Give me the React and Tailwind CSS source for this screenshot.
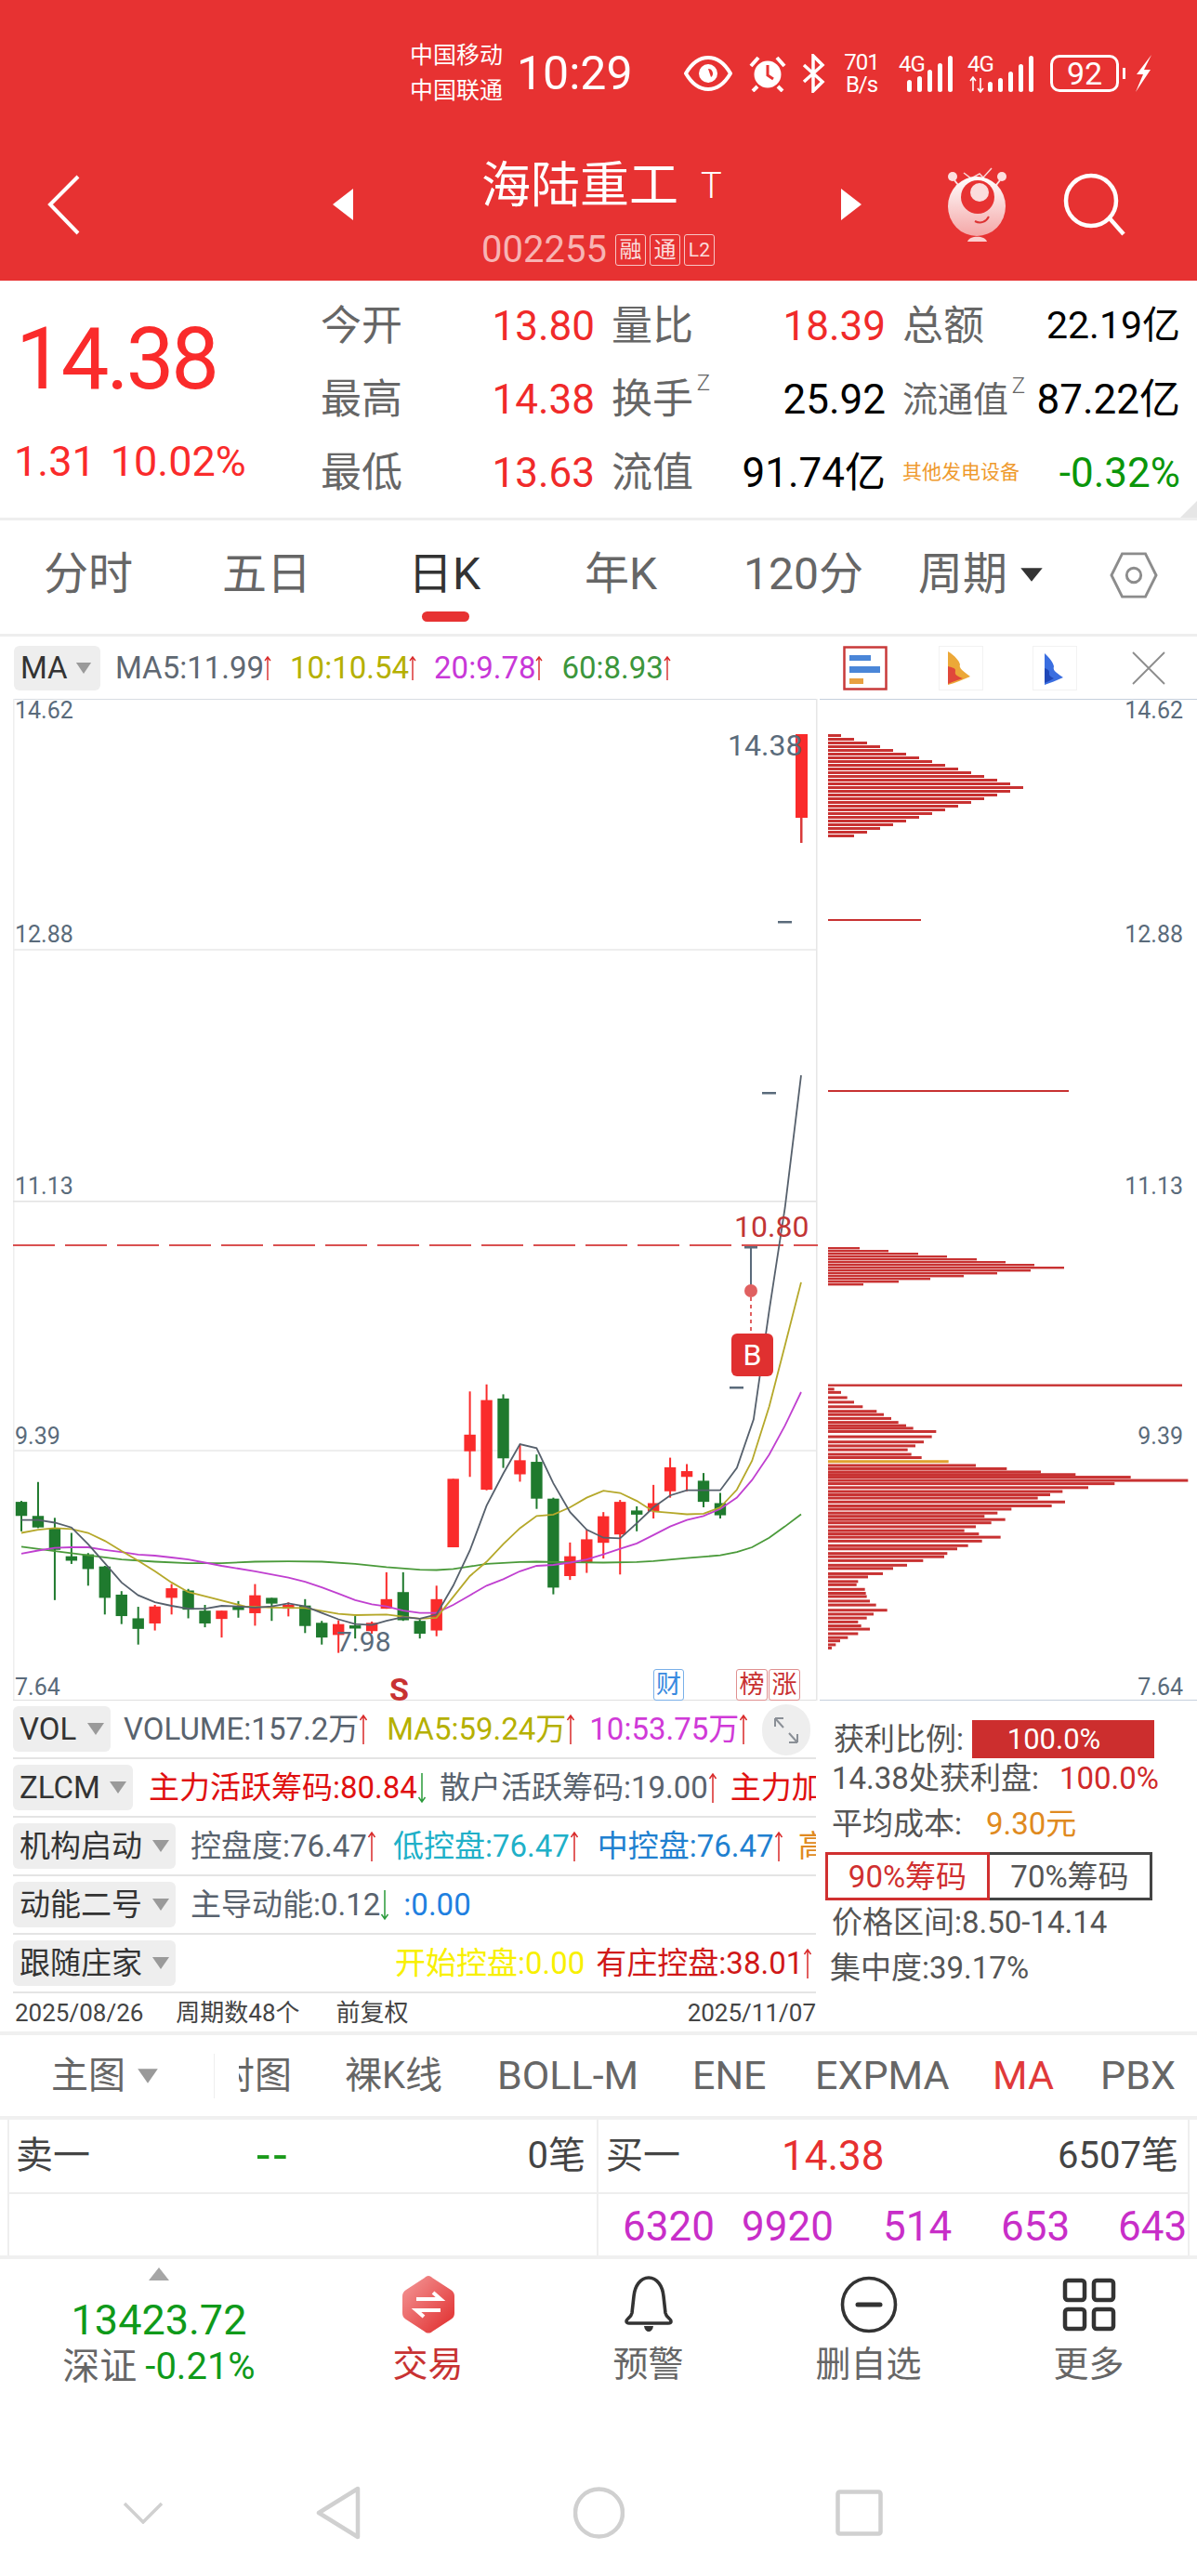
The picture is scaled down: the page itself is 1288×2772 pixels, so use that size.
import React from 'react';

const X = (z) => z / 1.782;
const Y = (z) => 1300 + z / 2.904;

// cx, wickTop, bodyTop, bodyBottom, wickBottom, up
const candles = [
  [41, 915, 918, 962, 1010, 0], [73, 856, 962, 998, 1000, 0], [105, 968, 1000, 1068, 1225, 0],
  [137, 1015, 1088, 1102, 1112, 0], [169, 1078, 1082, 1128, 1180, 0], [201, 1118, 1120, 1218, 1270, 0],
  [233, 1197, 1208, 1275, 1300, 0], [265, 1246, 1282, 1315, 1364, 0], [297, 1240, 1245, 1298, 1320, 1],
  [329, 1175, 1188, 1218, 1270, 1], [361, 1190, 1195, 1255, 1282, 0], [393, 1240, 1258, 1298, 1310, 0],
  [425, 1258, 1258, 1284, 1342, 1], [457, 1228, 1244, 1256, 1280, 0], [489, 1175, 1210, 1266, 1305, 1],
  [521, 1218, 1218, 1236, 1290, 0], [553, 1232, 1240, 1252, 1276, 1], [585, 1222, 1242, 1306, 1328, 0],
  [617, 1290, 1296, 1342, 1364, 0], [649, 1288, 1300, 1334, 1390, 1], [681, 1275, 1304, 1314, 1345, 0],
  [713, 1292, 1296, 1322, 1330, 1], [741, 1138, 1222, 1252, 1252, 1], [773, 1138, 1200, 1288, 1290, 0],
  [805, 1285, 1290, 1330, 1345, 0], [837, 1180, 1222, 1320, 1338, 1], [869, 846, 846, 1060, 1060, 1],
  [901, 573, 708, 760, 840, 1], [933, 551, 600, 880, 882, 1], [965, 582, 595, 782, 812, 0],
  [997, 740, 788, 832, 855, 1], [1029, 770, 793, 908, 940, 0], [1061, 905, 908, 1186, 1207, 0],
  [1093, 1045, 1088, 1150, 1162, 1], [1125, 1005, 1035, 1108, 1140, 1], [1157, 950, 963, 1046, 1095, 1],
  [1189, 912, 918, 1020, 1145, 1], [1221, 932, 945, 958, 1010, 0], [1253, 865, 922, 948, 970, 1],
  [1285, 780, 810, 885, 905, 1], [1317, 800, 822, 840, 885, 1], [1349, 828, 852, 918, 935, 0],
  [1381, 890, 922, 960, 970, 0],
];

const ma5 = [41,975,73,975,105,983,137,998,169,1050,201,1110,233,1170,265,1210,297,1232,329,1243,361,1252,393,1252,425,1243,457,1245,489,1248,521,1245,553,1235,585,1245,617,1265,649,1285,681,1300,713,1303,741,1290,773,1278,805,1283,837,1270,869,1180,901,1070,933,930,965,830,997,738,1029,750,1061,860,1093,950,1125,1005,1157,1030,1189,1032,1221,985,1253,935,1285,898,1317,882,1349,882,1381,882,1413,812,1445,660,1475,320,1505,0,1536,-415];
const ma10 = [41,1015,73,1005,105,1000,137,1003,169,1015,201,1040,233,1072,265,1102,297,1135,329,1170,361,1200,405,1218,470,1245,521,1248,585,1250,649,1268,681,1272,741,1270,805,1283,837,1280,869,1215,901,1150,933,1105,965,1050,997,1000,1029,962,1061,958,1093,935,1125,905,1157,883,1189,890,1221,915,1253,948,1285,952,1317,957,1349,955,1381,935,1413,880,1442,790,1475,620,1505,430,1536,232];
const ma20 = [41,1080,73,1070,105,1062,137,1060,169,1060,201,1068,233,1075,265,1083,297,1086,329,1092,361,1098,393,1108,425,1118,489,1135,553,1155,585,1168,617,1185,649,1205,681,1225,713,1238,741,1245,773,1258,805,1265,837,1265,869,1240,901,1210,933,1180,965,1160,997,1135,1029,1118,1061,1115,1093,1108,1125,1098,1157,1082,1189,1065,1221,1048,1253,1022,1285,995,1317,975,1349,962,1381,940,1413,905,1442,850,1475,770,1505,680,1536,575];
const ma60 = [41,1058,105,1072,169,1085,233,1098,297,1105,361,1110,425,1110,489,1105,553,1104,617,1105,681,1112,741,1122,805,1130,837,1131,869,1128,901,1120,933,1112,997,1106,1029,1105,1093,1107,1157,1108,1221,1106,1253,1103,1317,1094,1381,1085,1413,1075,1442,1060,1475,1030,1505,995,1536,957];

const toPoints = (arr) => {
  const out = [];
  for (let i = 0; i < arr.length; i += 2) out.push(`${X(arr[i]).toFixed(1)},${Y(arr[i + 1]).toFixed(1)}`);
  return out.join(' ');
};

// chip distribution, bottom group read as [zoomY, zoomX end]
const chipLow = [[1045,113],[1050,135],[1058,155],[1065,177],[1072,205],[1079,250],[1084,273],[1090,297],[1096,320],[1101,345],[1105,368],[1110,442],[1118,428],[1126,402],[1132,375],[1138,350],[1145,362],[1150,395],[1156,482],[1162,570],[1167,670],[1172,780],[1176,892],[1180,1070],[1185,1255],[1190,1018],[1196,933],[1202,850],[1207,810],[1212,770],[1218,858],[1224,815],[1229,685],[1235,640],[1240,598],[1245,665],[1250,620],[1256,570],[1262,533],[1267,580],[1272,650],[1278,590],[1285,545],[1290,510],[1297,478],[1302,468],[1308,400],[1315,348],[1320,303],[1328,270],[1333,222],[1340,190],[1345,185],[1352,212],[1358,215],[1363,218],[1370,228],[1376,248],[1384,284],[1390,240],[1396,218],[1402,190],[1408,200],[1413,228],[1420,190],[1426,157],[1431,132],[1437,118],[1442,105]];
const chipMid = [34, 65, 97, 128, 160, 191, 222, 254, 218, 182, 146, 110, 76, 38];

function TriDown({ className = 'w-[20px] h-[15px]', color = '#9a9a9a' }) {
  return (
    <svg viewBox="0 0 20 15" className={className} preserveAspectRatio="none">
      <path d="M1 1h18L10 14z" fill={color} />
    </svg>
  );
}

function Arrow({ up = true, className = '' }) {
  return (
    <svg viewBox="0 0 10 34" className={`w-[10px] h-[34px] shrink-0 ${className}`} fill="none" stroke={up ? '#d92a2a' : '#2a9a3a'} strokeWidth="1.5">
      {up ? <path d="M5 33V2M1.5 7 5 2l3.5 5" /> : <path d="M5 1v31M1.5 27 5 32l3.5-5" />}
    </svg>
  );
}

function SmallArrow() {
  return (
    <svg viewBox="0 0 8 28" className="w-[8px] h-[28px] shrink-0" fill="none" stroke="#d92a2a" strokeWidth="1.4">
      <path d="M4 27V2M1 6l3-4 3 4" />
    </svg>
  );
}

function Quote({ label, value, valueClass, sup, labelClass = 'text-[44px]' }) {
  return (
    <div className="flex items-center justify-between h-[79px]">
      <span className={`relative text-[#666666] ${labelClass}`}>
        {label}
        {sup && <span className="absolute -right-[18px] -top-[8px] text-[24px] font-light leading-none">Z</span>}
      </span>
      <span className={valueClass}>{value}</span>
    </div>
  );
}

function Signal({ extra }) {
  return (
    <div className={`relative h-[42px] shrink-0 ${extra ? 'w-[72px]' : 'w-[60px]'}`}>
      <span className="absolute left-0 top-0 text-[24px] leading-[22px] tracking-[-1px]">4G</span>
      <svg viewBox="0 0 72 42" className="absolute left-0 top-0 h-[42px] w-[72px]" fill="#fff">
        {extra ? (
          <>
            <path d="M6 26v14M3 29l3-4 3 4M14 40V26M11 37l3 4 3-4" stroke="#fff" strokeWidth="1.6" fill="none" />
            <rect x="22" y="30" width="5" height="11" rx="2.5" />
            <rect x="33" y="26" width="5" height="15" rx="2.5" />
            <rect x="44" y="19" width="5" height="22" rx="2.5" />
            <rect x="55" y="11" width="5" height="30" rx="2.5" />
            <rect x="66" y="2" width="5" height="39" rx="2.5" />
          </>
        ) : (
          <>
            <rect x="9" y="28" width="5" height="13" rx="2.5" />
            <rect x="20" y="24" width="5" height="17" rx="2.5" />
            <rect x="31" y="17" width="5" height="24" rx="2.5" />
            <rect x="42" y="10" width="5" height="31" rx="2.5" />
            <rect x="53" y="2" width="5" height="39" rx="2.5" />
          </>
        )}
      </svg>
    </div>
  );
}

function StatusBar() {
  return (
    <div className="flex items-center h-[78px] pl-[441px] text-white">
      <div className="flex flex-col w-[104px] text-[25px] leading-[38px] font-normal whitespace-nowrap">
        <span>中国移动</span>
        <span>中国联通</span>
      </div>
      <span className="ml-[11px] w-[122px] text-[50px] leading-none font-normal whitespace-nowrap">10:29</span>
      <svg viewBox="0 0 52 38" className="ml-[58px] w-[52px] h-[38px] shrink-0" fill="none">
        <path d="M2 19C9 7 17 2 26 2s17 5 24 17c-7 12-15 17-24 17S9 31 2 19z" stroke="#fff" strokeWidth="4" />
        <circle cx="26" cy="19" r="10" fill="#fff" />
        <path d="M26 14a5 5 0 0 1 3 9c-1-3-2-6-3-9z" fill="#e73232" />
      </svg>
      <svg viewBox="0 0 42 40" className="ml-[17px] w-[42px] h-[40px] shrink-0">
        <circle cx="21" cy="21" r="14.5" fill="#fff" />
        <path d="M21 11v11l6 4" stroke="#e73232" strokeWidth="3" fill="none" />
        <path d="M3 12 11 3M39 12 31 3M10 34l-5 5M32 34l5 5" stroke="#fff" strokeWidth="4" />
      </svg>
      <svg viewBox="0 0 26 42" className="ml-[16px] w-[26px] h-[42px] shrink-0" fill="none" stroke="#fff" strokeWidth="3.5">
        <path d="M2 12 22 30 12 40V2l10 10L2 30" />
      </svg>
      <div className="ml-[17px] flex flex-col w-[42px] text-[24px] leading-[24px] text-center tracking-[-1px] whitespace-nowrap">
        <span>701</span>
        <span>B/s</span>
      </div>
      <div className="ml-[19px]"><Signal /></div>
      <div className="ml-[14px]"><Signal extra /></div>
      <div className="ml-[17px] flex items-center justify-center w-[74px] h-[40px] rounded-[10px] border-[3px] border-white text-[34px] leading-none shrink-0">92</div>
      <span className="ml-[4px] w-[3px] h-[12px] bg-white shrink-0" />
      <svg viewBox="0 0 20 42" className="ml-[9px] w-[20px] h-[42px] shrink-0" fill="#fff">
        <path d="M19 1 3 22h7L2 41l16-24h-7z" />
      </svg>
    </div>
  );
}

function Mascot() {
  return (
    <svg viewBox="0 0 65 84" className="ml-[92px] w-[65px] h-[84px] shrink-0">
      <defs>
        <linearGradient id="mascot" x1="0" y1="0" x2="0" y2="1">
          <stop offset="0" stopColor="#ffffff" />
          <stop offset="1" stopColor="#f4a6a6" />
        </linearGradient>
      </defs>
      <path d="M18 8 26 14 35 9l4 4 9-10" stroke="#fff" strokeWidth="1.5" fill="none" opacity=".8" />
      <circle cx="6" cy="12" r="5" fill="#fde0e0" />
      <circle cx="59" cy="12" r="5" fill="#fde0e0" />
      <path d="M8 16 16 26M57 16 49 26" stroke="#fde0e0" strokeWidth="2" />
      <ellipse cx="32" cy="44" rx="31" ry="32" fill="url(#mascot)" />
      <circle cx="33" cy="34" r="18" fill="#e73232" />
      <circle cx="35" cy="29" r="10" fill="#fbdcdc" />
      <path d="M30 60c6 3 12 1 15-5" stroke="#d33" strokeWidth="2" fill="none" />
      <path d="M22 82c2-7 19-7 21 0z" fill="#fbd0d0" />
    </svg>
  );
}

function Header() {
  return (
    <div className="h-[302px] shrink-0 bg-[#e73232] pt-[40px]">
      <StatusBar />
      <div className="mt-[32px] flex items-center h-[140px] text-white">
        <svg viewBox="0 0 35 65" className="ml-[51px] w-[35px] h-[65px] shrink-0" fill="none" stroke="#fff" strokeWidth="4">
          <path d="M33 2 3 32l30 31" />
        </svg>
        <svg viewBox="0 0 22 34" className="ml-[272px] w-[22px] h-[34px] shrink-0" fill="#fff"><path d="M22 0v34L0 17z" /></svg>
        <div className="ml-[138px] w-[387px] self-start pt-[18px]">
          <div className="flex items-center h-[64px]">
            <span className="text-[53px] leading-none whitespace-nowrap">海陆重工</span>
            <span className="ml-[24px] text-[38px] leading-none font-light">T</span>
          </div>
          <div className="mt-[20px] flex items-center h-[34px]">
            <span className="text-[40px] leading-none text-[#f7b4b4]">002255</span>
            <span className="ml-[9px] flex items-center justify-center w-[33px] h-[34px] rounded-[3px] border border-[#f7c4c4] text-[24px] leading-none text-[#fbdcdc]">融</span>
            <span className="ml-[4px] flex items-center justify-center w-[33px] h-[34px] rounded-[3px] border border-[#f7c4c4] text-[24px] leading-none text-[#fbdcdc]">通</span>
            <span className="ml-[4px] flex items-center justify-center w-[33px] h-[34px] rounded-[3px] border border-[#f7c4c4] text-[21px] leading-none text-[#fbdcdc]">L2</span>
          </div>
        </div>
        <svg viewBox="0 0 22 34" className="w-[22px] h-[34px] shrink-0" fill="#fff"><path d="M0 0v34l22-17z" /></svg>
        <Mascot />
        <svg viewBox="0 0 68 68" className="ml-[60px] w-[68px] h-[68px] shrink-0" fill="none" stroke="#fff" strokeWidth="4.5">
          <circle cx="30" cy="30" r="27" />
          <path d="m50 49 15 17" />
        </svg>
      </div>
    </div>
  );
}

function QuotePanel() {
  return (
    <div className="relative flex h-[258px] shrink-0 border-b-[3px] border-[#eeeeee]">
      <div className="w-[345px] shrink-0 text-[#fa2b2b]">
        <div className="mt-[33px] pl-[17px] h-[104px] flex items-center text-[92px] leading-none tracking-[-3px]">14.38</div>
        <div className="mt-[32px] pl-[15px] h-[50px] flex items-center text-[45px] leading-none whitespace-nowrap">
          <span>1.31</span>
          <span className="ml-[16px]">10.02%</span>
        </div>
      </div>
      <div className="pt-[9px] grid content-start grid-cols-[295px_295px_299px] gap-x-[18px] whitespace-nowrap leading-none">
        <Quote label="今开" value="13.80" valueClass="text-[44px] text-[#f02a2a]" />
        <Quote label="量比" value="18.39" valueClass="text-[44px] text-[#f02a2a]" />
        <Quote label="总额" value="22.19亿" valueClass="text-[41px] text-black" />
        <Quote label="最高" value="14.38" valueClass="text-[44px] text-[#f02a2a]" />
        <Quote label="换手" sup value="25.92" valueClass="text-[44px] text-black" />
        <Quote label="流通值" sup labelClass="text-[38px]" value="87.22亿" valueClass="text-[44px] text-black" />
        <Quote label="最低" value="13.63" valueClass="text-[44px] text-[#f02a2a]" />
        <Quote label="流值" value="91.74亿" valueClass="text-[44px] text-black" />
        <div className="flex items-center justify-between h-[79px]">
          <span className="text-[21px] text-[#ef9a2e]">其他发电设备</span>
          <span className="text-[44px] text-[#0a960a]">-0.32%</span>
        </div>
      </div>
      <svg viewBox="0 0 18 18" className="absolute right-0 bottom-0 w-[18px] h-[18px]"><path d="M18 0v18H0z" fill="#e6e6e6" /></svg>
    </div>
  );
}

function PeriodTabs() {
  return (
    <div className="flex h-[125px] shrink-0 border-b-[3px] border-[#eeeeee] pl-[47px] pt-[28px] text-[48px] leading-[60px] text-[#666666] whitespace-nowrap">
      <span className="w-[192px]">分时</span>
      <span className="w-[200px]">五日</span>
      <div className="w-[190px] flex flex-col">
        <span className="text-[#333333]">日K</span>
        <span className="mt-[10px] ml-[15px] w-[51px] h-[11px] rounded-full bg-[#e73232]" />
      </div>
      <span className="w-[171px]">年K</span>
      <span className="w-[188px]">120分</span>
      <span className="w-[109px]">周期</span>
      <TriDown className="mt-[22px] w-[26px] h-[17px]" color="#333333" />
      <svg viewBox="0 0 54 52" className="ml-[70px] mt-[6px] w-[54px] h-[50px] shrink-0" fill="none" stroke="#8c8c8c" strokeWidth="3">
        <path d="M14 2h26l12 24-12 24H14L2 26z" />
        <circle cx="27" cy="26" r="8" />
      </svg>
    </div>
  );
}

function MaBar() {
  return (
    <div className="flex items-center h-[67px] shrink-0 pl-[15px] text-[33px] leading-none whitespace-nowrap">
      <div className="flex items-center w-[93px] h-[48px] pl-[7px] rounded-md bg-[#eeeeee] text-[#333333] text-[33px]">
        MA<TriDown className="ml-[8px] w-[18px] h-[14px]" />
      </div>
      <span className="ml-[16px] text-[#5f6872]">MA5:11.99</span>
      <SmallArrow />
      <span className="ml-[20px] text-[#b5b000]">10:10.54</span>
      <SmallArrow />
      <span className="ml-[19px] text-[#c838d8]">20:9.78</span>
      <SmallArrow />
      <span className="ml-[20px] text-[#3c963c]">60:8.93</span>
      <SmallArrow />
      <svg viewBox="0 0 48 48" className="ml-[185px] w-[48px] h-[48px] shrink-0">
        <rect x="1.5" y="1.5" width="45" height="45" fill="#fff" stroke="#c83a3a" strokeWidth="2.5" />
        <rect x="7" y="10" width="23" height="6" fill="#4a86d8" />
        <rect x="7" y="22" width="33" height="7" fill="#4a86d8" />
        <rect x="7" y="35" width="15" height="6" fill="#e8a040" />
      </svg>
      <svg viewBox="0 0 48 48" className="ml-[55px] w-[48px] h-[48px] shrink-0">
        <rect x=".5" y=".5" width="47" height="47" fill="#fff" stroke="#f2f2f2" />
        <path d="M10 6c8 5 12 10 13 14-1 3 0 5 11 13-8 3-16 7-24 9z" fill="#eca838" />
        <path d="M10 22c4 1 8 2 8 4 0 4-2 5 8 9-6 2-12 4-16 6z" fill="#e0483a" />
      </svg>
      <svg viewBox="0 0 48 48" className="ml-[53px] w-[48px] h-[48px] shrink-0">
        <rect x=".5" y=".5" width="47" height="47" fill="#fff" stroke="#f2f2f2" />
        <path d="M13 8c5 5 9 9 10 14-1 4 0 5 10 12-7 3-14 6-20 8z" fill="#3a6ee0" />
        <path d="M13 24c3 1 5 2 5 4 0 3-1 4 5 7-4 2-7 4-10 5z" fill="#1f47b8" />
      </svg>
      <svg viewBox="0 0 36 36" className="ml-[59px] w-[36px] h-[36px] shrink-0" fill="none" stroke="#8c8c8c" strokeWidth="1.8">
        <path d="m1 1 34 34M35 1 1 35" />
      </svg>
    </div>
  );
}

function Chart() {
  const bars1 = Array.from({ length: 28 }, (_, i) => {
    const d = Math.abs(i - 14) / 14;
    return { y: 790 + i * 4, w: 14 + (1 - d) * 196 };
  });
  return (
    <div className="relative h-[1078px] shrink-0 text-[25px] leading-none text-[#5a6b7b]">
      <svg viewBox="0 752 1288 1078" className="absolute inset-0 w-[1288px] h-[1078px]">
        <rect x="14" y="751" width="864" height="2" fill="#d8dde2" />
        <rect x="882" y="750" width="406" height="3" fill="#c5cfdc" />
        <rect x="14" y="752" width="1.5" height="1078" fill="#eeeeee" />
        <rect x="878" y="752" width="1.5" height="1078" fill="#e6e6e6" />
        <rect x="14" y="1021" width="864" height="2" fill="#eeeeee" />
        <rect x="14" y="1292" width="864" height="1.5" fill="#e2e2e2" />
        <rect x="14" y="1560" width="864" height="2" fill="#eeeeee" />
        <rect x="14" y="1829" width="864" height="2" fill="#e0e0e0" />
        <rect x="882" y="1829" width="406" height="2.5" fill="#c5cfdc" />

        <line x1="14" y1="1340" x2="880" y2="1340" stroke="#d95050" strokeWidth="2" strokeDasharray="45 11" />

        {candles.map(([cx, wt, bt, bb, wb, up]) => {
          const color = up ? '#fa2b2b' : '#1f7a2e';
          const x = X(cx);
          return (
            <g key={cx}>
              <rect x={x - 1} y={Y(wt)} width="2" height={Y(wb) - Y(wt)} fill={color} />
              <rect x={x - 6.2} y={Y(bt)} width="12.4" height={Y(bb) - Y(bt)} fill={color} />
            </g>
          );
        })}
        <rect x="785" y="1492" width="15" height="2.5" fill="#5a6b7b" />
        <rect x="820" y="1175" width="15" height="2.5" fill="#5a6b7b" />
        <rect x="837" y="991" width="15" height="2.5" fill="#5a6b7b" />
        <rect x="856" y="790" width="13" height="90" fill="#fa2b2b" />
        <rect x="861" y="880" width="2.5" height="27" fill="#d93a3a" />

        <polyline points={toPoints(ma60)} fill="none" stroke="#4a9a3a" strokeWidth="1.8" />
        <polyline points={toPoints(ma20)} fill="none" stroke="#c040d0" strokeWidth="1.8" />
        <polyline points={toPoints(ma10)} fill="none" stroke="#b5a82a" strokeWidth="1.8" />
        <polyline points={toPoints(ma5)} fill="none" stroke="#56606c" strokeWidth="1.8" />

        <rect x="801" y="1341" width="14" height="2.5" fill="#5a6b7b" />
        <rect x="807" y="1342" width="2" height="47" fill="#5a6b7b" />
        <ellipse cx="808" cy="1389" rx="7" ry="7" fill="#e06060" />
        <line x1="808" y1="1396" x2="808" y2="1435" stroke="#e06060" strokeWidth="2" strokeDasharray="4 4" />

        {bars1.map((b) => <rect key={b.y} x="891" y={b.y} width={b.w} height="3" fill="#c83232" />)}
        <rect x="891" y="989" width="100" height="2" fill="#c83232" />
        <rect x="891" y="1173" width="259" height="2" fill="#c83232" />
        {chipMid.map((w, i) => <rect key={i} x="891" y={1342 + i * 3} width={w} height="2.4" fill="#c83232" />)}
        <rect x="891" y="1489.5" width="381" height="2.4" fill="#c83232" />
        {chipLow.map(([zy, zx]) => (
          <rect key={zy} x="891" y={760 + zy / 1.425} width={(zx - 93) / 3} height="3" fill={zy === 1156 ? '#e0a030' : '#c83232'} />
        ))}
      </svg>

      <span className="absolute left-[16px] top-[0px]">14.62</span>
      <span className="absolute left-[16px] top-[241px]">12.88</span>
      <span className="absolute left-[16px] top-[512px]">11.13</span>
      <span className="absolute left-[16px] top-[781px]">9.39</span>
      <span className="absolute left-[16px] top-[1051px]">7.64</span>
      <span className="absolute right-[15px] top-[0px]">14.62</span>
      <span className="absolute right-[15px] top-[241px]">12.88</span>
      <span className="absolute right-[15px] top-[512px]">11.13</span>
      <span className="absolute right-[15px] top-[781px]">9.39</span>
      <span className="absolute right-[15px] top-[1051px]">7.64</span>

      <span className="absolute left-[783px] top-[34px] text-[32px]">14.38</span>
      <span className="absolute left-[790px] top-[552px] text-[32px] text-[#c23535]">10.80</span>
      <span className="absolute left-[362px] top-[1000px] text-[30px]">7.98</span>
      <span className="absolute left-[787px] top-[683px] flex items-center justify-center w-[45px] h-[46px] rounded-md bg-[#e03030] text-[32px] text-white">B</span>
      <span className="absolute left-[419px] top-[1049px] text-[34px] font-bold text-[#c83232]">S</span>
      <span className="absolute left-[703px] top-[1044px] flex items-center justify-center w-[33px] h-[34px] rounded-[3px] border border-[#7ab0e8] text-[27px] text-[#3a8ae0]">财</span>
      <span className="absolute left-[792px] top-[1044px] flex items-center justify-center w-[34px] h-[34px] rounded-[3px] border border-[#e09090] text-[27px] text-[#c83232]">榜</span>
      <span className="absolute left-[827px] top-[1044px] flex items-center justify-center w-[34px] h-[34px] rounded-[3px] border border-[#e09090] text-[27px] text-[#c83232]">涨</span>
    </div>
  );
}

function IndicatorRow({ name, width, children }) {
  return (
    <div className="relative flex items-center h-[63px] border-b-2 border-[#e4e4e4] overflow-hidden whitespace-nowrap text-[33px] leading-none text-[#59636e]">
      <div className={`flex items-center justify-between h-[49px] pl-[7px] pr-[6px] rounded-md bg-[#eeeeee] text-[#333333] shrink-0 ${width}`}>
        {name}<TriDown className="w-[20px] h-[15px] shrink-0" />
      </div>
      {children}
    </div>
  );
}

function Indicators() {
  return (
    <div className="w-[864px] ml-[14px] shrink-0">
      <IndicatorRow name="VOL" width="w-[105px]">
        <span className="ml-[14px]">VOLUME:157.2万</span>
        <Arrow />
        <span className="ml-[20px] text-[#b5b000]">MA5:59.24万</span>
        <Arrow />
        <span className="ml-[15px] text-[#d03ad8]">10:53.75万</span>
        <Arrow />
        <div className="absolute left-[806px] top-[4px] flex items-center justify-center w-[52px] h-[55px] rounded-full bg-[#eeeeee]">
          <svg viewBox="0 0 30 32" className="w-[30px] h-[32px]" fill="none" stroke="#8a8f96" strokeWidth="2">
            <path d="M3 3l9 10M3 3v9M3 3h9M27 29l-9-10M27 29v-9M27 29h-9" />
          </svg>
        </div>
      </IndicatorRow>
      <IndicatorRow name="ZLCM" width="w-[129px]">
        <span className="ml-[17px] text-[#e01010]">主力活跃筹码:80.84</span>
        <Arrow up={false} />
        <span className="ml-[14px]">散户活跃筹码:19.00</span>
        <Arrow />
        <span className="ml-[14px] text-[#e01010]">主力加</span>
      </IndicatorRow>
      <IndicatorRow name="机构启动" width="w-[175px]">
        <span className="ml-[16px]">控盘度:76.47</span>
        <Arrow />
        <span className="ml-[18px] text-[#20b0c8]">低控盘:76.47</span>
        <Arrow />
        <span className="ml-[20px] text-[#2080d0]">中控盘:76.47</span>
        <Arrow />
        <span className="ml-[16px] text-[#e08a20]">高控盘</span>
      </IndicatorRow>
      <IndicatorRow name="动能二号" width="w-[175px]">
        <span className="ml-[16px]">主导动能:0.12</span>
        <Arrow up={false} />
        <span className="ml-[15px] text-[#2080e0]">:0.00</span>
      </IndicatorRow>
      <IndicatorRow name="跟随庄家" width="w-[175px]">
        <span className="ml-[236px] text-[#f8f000]">开始控盘:0.00</span>
        <span className="ml-[12px] text-[#d01818]">有庄控盘:38.01</span>
        <Arrow />
      </IndicatorRow>
      <div className="flex items-center h-[41px] pl-[2px] text-[26px] leading-none text-[#444444] whitespace-nowrap">
        <span>2025/08/26</span>
        <span className="ml-[35px]">周期数48个</span>
        <span className="ml-[39px]">前复权</span>
        <span className="ml-auto">2025/11/07</span>
      </div>
    </div>
  );
}

function ChipStats() {
  return (
    <div className="ml-[4px] flex-1 pt-[21px] text-[33px] leading-none text-[#555555] whitespace-nowrap">
      <div className="flex items-center h-[41px] pl-[15px]">
        <span>获利比例:</span>
        <span className="ml-[9px] flex items-center justify-center w-[196px] h-[41px] bg-[#cc2e2e] text-white text-[31px] pr-[20px]">100.0%</span>
      </div>
      <div className="mt-[2px] flex items-center h-[38px] pl-[13px]">
        <span>14.38处获利盘:</span>
        <span className="ml-[22px] text-[#d02a2a]">100.0%</span>
      </div>
      <div className="mt-[11px] flex items-center h-[38px] pl-[13px]">
        <span>平均成本:</span>
        <span className="ml-[26px] text-[#e08a20]">9.30元</span>
      </div>
      <div className="mt-[12px] ml-[6px] flex h-[52px] w-[352px]">
        <span className="flex items-center justify-center w-[177px] border-[3px] border-[#d03030] text-[#d03030]">90%筹码</span>
        <span className="flex items-center justify-center w-[175px] border-y-[3px] border-r-[3px] border-[#444444]">70%筹码</span>
      </div>
      <div className="mt-[4px] flex items-center h-[38px] pl-[13px]">价格区间:8.50-14.14</div>
      <div className="mt-[11px] flex items-center h-[38px] pl-[11px]">集中度:39.17%</div>
    </div>
  );
}

function IndexTabs() {
  return (
    <div className="flex items-center h-[95px] shrink-0 border-y-[4px] border-[#f0f0f0] text-[40px] leading-none text-[#666666] whitespace-nowrap">
      <span className="ml-[55px]">主图</span>
      <TriDown className="ml-[12px] w-[24px] h-[18px]" />
      <span className="ml-[59px] w-px h-[48px] bg-[#eeeeee]" />
      <div className="ml-[26px] flex justify-end w-[57px] overflow-hidden"><span className="shrink-0">对图</span></div>
      <span className="ml-[57px] w-[164px]">裸K线</span>
      <span className="w-[210px] text-[43px]">BOLL-M</span>
      <span className="w-[132px] text-[43px]">ENE</span>
      <span className="w-[191px] text-[43px]">EXPMA</span>
      <span className="w-[116px] text-[43px] text-[#e03a3a]">MA</span>
      <span className="text-[43px]">PBX</span>
    </div>
  );
}

function OrderBook() {
  return (
    <div className="mx-[8px] shrink-0 border-x-2 border-[#eeeeee] grid grid-cols-2 whitespace-nowrap leading-none">
      <div className="flex items-center h-[80px] border-b-2 border-r-2 border-[#eeeeee] pl-[7px] pr-[12px] text-[40px] text-[#444444]">
        <span>卖一</span>
        <span className="ml-[179px] text-[52px] text-[#1a9a1a] tracking-[4px]">--</span>
        <span className="ml-auto">0笔</span>
      </div>
      <div className="flex items-center h-[80px] border-b-2 border-[#eeeeee] pl-[8px] pr-[10px] text-[40px] text-[#444444]">
        <span>买一</span>
        <span className="ml-[109px] text-[44px] text-[#e63030]">14.38</span>
        <span className="ml-auto">6507笔</span>
      </div>
      <div className="h-[66px] border-r-2 border-[#eeeeee]" />
      <div className="flex items-center h-[66px] pl-[26px] pt-[4px] text-[44px] text-[#c82ec8]">
        <span className="w-[128px]">6320</span>
        <span className="w-[152px]">9920</span>
        <span className="w-[127px]">514</span>
        <span className="w-[126px]">653</span>
        <span>643</span>
      </div>
    </div>
  );
}

function NavItem({ label, color = 'text-[#666666]', children }) {
  return (
    <div className="flex flex-col items-center w-[237px] shrink-0">
      <div className="flex items-center justify-center h-[64px]">{children}</div>
      <span className={`mt-[10px] h-[44px] flex items-center text-[38px] leading-none whitespace-nowrap ${color}`}>{label}</span>
    </div>
  );
}

function BottomNav() {
  return (
    <div className="flex h-[140px] shrink-0 border-t-[4px] border-[#f0f0f0]">
      <div className="flex flex-col items-center w-[342px] shrink-0 pt-[9px] whitespace-nowrap leading-none">
        <svg viewBox="0 0 22 14" className="w-[22px] h-[14px] shrink-0"><path d="M11 0 22 14H0z" fill="#a6a6a6" /></svg>
        <span className="mt-[20px] h-[50px] flex items-center text-[45px] text-[#0f9a1a]">13423.72</span>
        <span className="mt-[8px] h-[46px] flex items-center text-[40px] text-[#666666]">深证<span className="ml-[9px] text-[#0f9a1a]">-0.21%</span></span>
      </div>
      <div className="flex pt-[17px]">
        <NavItem label="交易" color="text-[#c83232]">
          <svg viewBox="0 0 58 64" className="w-[58px] h-[64px]">
            <defs>
              <linearGradient id="trade" x1="0" y1="0" x2="1" y2="1">
                <stop offset="0" stopColor="#f49a9a" />
                <stop offset="1" stopColor="#e02a2a" />
              </linearGradient>
            </defs>
            <path d="M29 1c2 0 3 1 4 2l20 13c3 2 4 4 4 7v18c0 3-1 5-4 7L33 61c-2 2-6 2-8 0L5 48c-3-2-4-4-4-7V23c0-3 1-5 4-7L25 3c1-1 2-2 4-2z" fill="url(#trade)" />
            <path d="M16 26h26l-8-7M42 38H16l8 7" fill="none" stroke="#fff" strokeWidth="4" />
          </svg>
        </NavItem>
        <NavItem label="预警">
          <svg viewBox="0 0 54 64" className="w-[54px] h-[64px]" fill="none" stroke="#333333" strokeWidth="3.6">
            <path d="M3 50c0-3 5-4 6-9l2-18C12 12 18 3 27 3s15 9 16 20l2 18c1 5 6 6 6 9 0 1-1 2-3 2H6c-2 0-3-1-3-2z" />
            <path d="M22 55c1 8 9 8 10 0z" fill="#333333" stroke="none" />
          </svg>
        </NavItem>
        <NavItem label="删自选">
          <svg viewBox="0 0 62 64" className="w-[62px] h-[64px]" fill="none" stroke="#333333" strokeWidth="3.6">
            <circle cx="31" cy="32" r="28.5" />
            <path d="M19 32h24" strokeWidth="5" strokeLinecap="round" />
          </svg>
        </NavItem>
        <NavItem label="更多">
          <svg viewBox="0 0 58 58" className="w-[58px] h-[58px]" fill="none" stroke="#333333" strokeWidth="4.5">
            <rect x="3" y="3" width="21" height="21" rx="3" />
            <rect x="34" y="3" width="21" height="21" rx="3" />
            <rect x="3" y="34" width="21" height="21" rx="3" />
            <rect x="34" y="34" width="21" height="21" rx="3" />
          </svg>
        </NavItem>
      </div>
    </div>
  );
}

function SystemNav() {
  return (
    <div className="mt-[108px] flex items-center h-[58px] shrink-0 pl-[132px]">
      <svg viewBox="0 0 44 24" className="w-[44px] h-[24px]" fill="none" stroke="#d0d0d0" strokeWidth="3.5"><path d="M2 2 22 22 42 2" /></svg>
      <svg viewBox="0 0 48 58" className="ml-[164px] w-[48px] h-[58px]" fill="none" stroke="#d0d0d0" strokeWidth="4.5"><path d="M45 3v52L3 29z" strokeLinejoin="round" /></svg>
      <svg viewBox="0 0 55 58" className="ml-[229px] w-[55px] h-[58px]" fill="none" stroke="#d0d0d0" strokeWidth="4.5"><circle cx="27.5" cy="29" r="25.5" /></svg>
      <svg viewBox="0 0 51 50" className="ml-[227px] w-[51px] h-[50px]" fill="none" stroke="#d0d0d0" strokeWidth="4.5"><rect x="2.5" y="2.5" width="46" height="45" rx="2" /></svg>
    </div>
  );
}

export default function App() {
  return (
    <div className="flex flex-col w-[1288px] h-[2772px] overflow-hidden bg-white font-[Roboto,'Noto_Sans_CJK_SC',sans-serif]">
      <Header />
      <QuotePanel />
      <PeriodTabs />
      <MaBar />
      <Chart />
      <div className="flex h-[356px] shrink-0">
        <Indicators />
        <ChipStats />
      </div>
      <IndexTabs />
      <OrderBook />
      <BottomNav />
      <SystemNav />
    </div>
  );
}
